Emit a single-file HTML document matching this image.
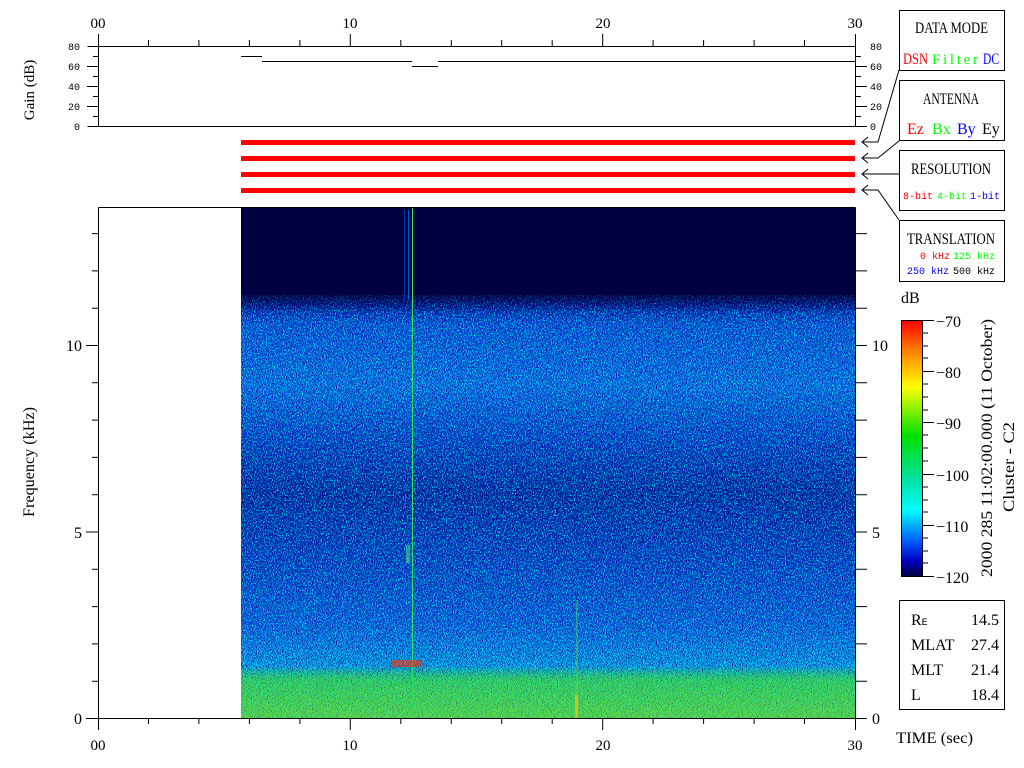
<!DOCTYPE html>
<html><head><meta charset="utf-8"><style>
html,body{margin:0;padding:0;background:#fff;width:1024px;height:768px;overflow:hidden}
svg{display:block}
.s{font-family:"Liberation Serif",serif;}
.m{font-family:"Liberation Mono",monospace;}
</style></head><body>
<svg width="1024" height="768" viewBox="0 0 1024 768" xmlns="http://www.w3.org/2000/svg">
<defs>
<linearGradient id="sp" x1="0" y1="0" x2="0" y2="1" gradientUnits="objectBoundingBox">
<stop offset="0" stop-color="#000040"/>
<stop offset="0.165" stop-color="#000040"/>
<stop offset="0.19" stop-color="#0010a0"/>
<stop offset="0.23" stop-color="#0a50e0"/>
<stop offset="0.35" stop-color="#1070f0"/>
<stop offset="0.45" stop-color="#0840d0"/>
<stop offset="0.56" stop-color="#0020a0"/>
<stop offset="0.68" stop-color="#0838c8"/>
<stop offset="0.82" stop-color="#1060e8"/>
<stop offset="0.9" stop-color="#10a0f0"/>
<stop offset="0.925" stop-color="#30d080"/>
<stop offset="1" stop-color="#60e040"/>
</linearGradient>
<linearGradient id="cb" x1="0" y1="0" x2="0" y2="1">
<stop offset="0" stop-color="#ff0000"/>
<stop offset="0.12" stop-color="#ff8000"/>
<stop offset="0.26" stop-color="#ffff00"/>
<stop offset="0.45" stop-color="#00e000"/>
<stop offset="0.62" stop-color="#00e0a0"/>
<stop offset="0.74" stop-color="#00ffff"/>
<stop offset="0.86" stop-color="#0060ff"/>
<stop offset="0.94" stop-color="#0000c0"/>
<stop offset="1" stop-color="#000040"/>
</linearGradient>
<linearGradient id="gr" x1="0" y1="0" x2="0" y2="1">
<stop offset="0" stop-color="#40e040" stop-opacity="0"/>
<stop offset="0.3" stop-color="#40e040" stop-opacity="0.5"/>
<stop offset="1" stop-color="#60e040" stop-opacity="0.55"/>
</linearGradient>
<filter id="nz" x="0" y="0" width="100%" height="100%">
<feTurbulence type="fractalNoise" baseFrequency="0.9 0.6" numOctaves="1" seed="3"/>
<feColorMatrix type="matrix" values="0 0 0 0 0  0 0 0 0 1  0 0 0 0 1  5 0 0 0 -2.4"/>
</filter>
<filter id="nz2" x="0" y="0" width="100%" height="100%">
<feTurbulence type="fractalNoise" baseFrequency="0.8 1.0" numOctaves="1" seed="9"/>
<feColorMatrix type="matrix" values="0 0 0 0 0  0 0 0 0 0  0 0 0 0 0.2  5 0 0 0 -2.5"/>
</filter>
<linearGradient id="fade" x1="0" y1="0" x2="0" y2="1">
<stop offset="0" stop-color="#000040" stop-opacity="1"/>
<stop offset="1" stop-color="#000040" stop-opacity="0"/>
</linearGradient>
</defs>

<g class="s" font-size="15" text-anchor="middle" fill="#000">
<text x="98" y="28">00</text><text x="350" y="28">10</text><text x="603" y="28">20</text><text x="855" y="28">30</text>
<text x="98" y="750">00</text><text x="350" y="750">10</text><text x="603" y="750">20</text><text x="855" y="750">30</text>
</g>
<g stroke="#000" stroke-width="1" fill="none">
<path d="M87.5 46.5H855.5V126.5H87.5M98.5 34V126.5M855.5 34V126.5"/>
<path d="M148.5 40V46M198.9 40V46M249.4 40V46M299.9 40V46M400.8 40V46M451.3 40V46M501.7 40V46M552.2 40V46M653.1 40V46M703.6 40V46M754.1 40V46M804.5 40V46M350.3 34V46M602.7 34V46"/>
<path d="M87 66.5H98M87 86.5H98M87 106.5H98M93 56.5H98M93 76.5H98M93 96.5H98M93 116.5H98"/>
<path d="M855 66.5H867M855 86.5H867M855 106.5H867M855 126.5H867M855 56.5H861M855 76.5H861M855 96.5H861M855 116.5H861"/>
<path d="M241 56.5H262M262 61.5H412M412 66.5H438M438 61.5H855"/>
</g>
<g class="m" font-size="10" fill="#000">
<g text-anchor="end"><text x="80" y="50">80</text><text x="80" y="70">60</text><text x="80" y="90">40</text><text x="80" y="110">20</text><text x="80" y="130">0</text></g>
<text x="870" y="50">80</text><text x="870" y="70">60</text><text x="870" y="90">40</text><text x="870" y="110">20</text><text x="870" y="130">0</text>
</g>
<text class="s" font-size="15" transform="translate(34,90) rotate(-90)" text-anchor="middle">Gain (dB)</text>

<g fill="#ff0000"><rect x="241" y="140" width="614" height="5"/><rect x="241" y="156" width="614" height="5"/><rect x="241" y="172" width="614" height="5"/><rect x="241" y="188" width="614" height="5"/></g>

<rect x="241" y="207" width="614" height="511" fill="url(#sp)"/>
<rect x="241" y="290" width="614" height="428" filter="url(#nz)" opacity="0.85"/>
<rect x="241" y="290" width="614" height="428" filter="url(#nz2)"/>
<rect x="241" y="665" width="614" height="53" fill="url(#gr)"/>
<rect x="241" y="207" width="614" height="88" fill="#000040"/>
<rect x="241" y="295" width="614" height="18" fill="url(#fade)" opacity="0.7"/>
<rect x="412" y="208" width="1" height="505" fill="#30e060"/>
<rect x="408" y="210" width="1" height="90" fill="#0080ff" opacity="0.7"/>
<rect x="404" y="210" width="1" height="90" fill="#0060ff" opacity="0.5"/>
<rect x="392" y="660" width="30" height="7" fill="#ff3000" opacity="0.6"/>
<rect x="406" y="545" width="4" height="18" fill="#40e080" opacity="0.6"/>
<rect x="576" y="600" width="2" height="118" fill="#60e040" opacity="0.4"/>
<rect x="575" y="695" width="3" height="23" fill="#ffc000" opacity="0.7"/>

<g stroke="#000" fill="none">
<path d="M98.5 207.5H855.5M98.5 207.5V718.5M98.5 718.5H855.5M855.5 207.5V718.5"/>
<path d="M98.5 718V730M148.5 718V724M198.9 718V724M249.4 718V724M299.9 718V724M350.3 718V730M400.8 718V724M451.3 718V724M501.7 718V724M552.2 718V724M602.7 718V730M653.1 718V724M703.6 718V724M754.1 718V724M804.5 718V724M855.5 718V730"/>
<path d="M86 718.5H98M92 681.2H98M92 643.9H98M92 606.6H98M92 569.3H98M86 532H98M92 494.7H98M92 457.4H98M92 420.1H98M92 382.8H98M86 345.5H98M92 308.2H98M92 270.9H98M92 233.6H98"/>
<path d="M855 718.5H867M855 681.2H867M855 643.9H867M855 606.6H867M855 569.3H867M855 532H867M855 494.7H867M855 457.4H867M855 420.1H867M855 382.8H867M855 345.5H867M855 308.2H867M855 270.9H867M855 233.6H867"/>
</g>
<g class="s" font-size="16" fill="#000">
<g text-anchor="end"><text x="82" y="351">10</text><text x="82" y="538">5</text><text x="82" y="724">0</text></g>
<text x="872" y="351">10</text><text x="872" y="538">5</text><text x="872" y="724">0</text>
<text x="896" y="743" textLength="77" lengthAdjust="spacingAndGlyphs">TIME (sec)</text>
</g>
<text class="s" font-size="16" transform="translate(34,462) rotate(-90)" text-anchor="middle" textLength="110" lengthAdjust="spacingAndGlyphs">Frequency (kHz)</text>

<g stroke="#000" fill="#fff">
<rect x="899.5" y="10.5" width="105" height="60"/>
<rect x="899.5" y="80.5" width="105" height="60"/>
<rect x="899.5" y="150.5" width="105" height="60"/>
<rect x="899.5" y="220.5" width="105" height="61"/>
<rect x="899.5" y="600.5" width="105" height="109"/>
</g>
<g stroke="#000" fill="none">
<path d="M899 70L878 142H862M868 137L862 142L868 147"/>
<path d="M899 141L878 158H862M868 153L862 158L868 163"/>
<path d="M899 174H862M868 169L862 174L868 179"/>
<path d="M899 220L878 190H862M868 185L862 190L868 195"/>
</g>
<g class="s" font-size="16">
<text x="915" y="33" textLength="73" lengthAdjust="spacingAndGlyphs">DATA MODE</text>
<text x="923" y="104" textLength="56" lengthAdjust="spacingAndGlyphs">ANTENNA</text>
<text x="911" y="174" textLength="80" lengthAdjust="spacingAndGlyphs">RESOLUTION</text>
<text x="907" y="244" textLength="88" lengthAdjust="spacingAndGlyphs">TRANSLATION</text>
</g>
<g class="s" font-size="16">
<text x="903" y="64" fill="#ff0000" textLength="25" lengthAdjust="spacingAndGlyphs">DSN</text><text x="932" y="64" fill="#00ff00" font-size="15" textLength="46" lengthAdjust="spacing">Filter</text><text x="983" y="64" fill="#0000ff" textLength="16" lengthAdjust="spacingAndGlyphs">DC</text>
<text x="907" y="134" fill="#ff0000">Ez</text><text x="932" y="134" fill="#00ff00">Bx</text><text x="957" y="134" fill="#0000ff">By</text><text x="982" y="134" fill="#000">Ey</text>
</g>
<g class="m" font-size="10">
<text x="903" y="199" fill="#ff0000" textLength="30" lengthAdjust="spacingAndGlyphs">8-bit</text><text x="937" y="199" fill="#00ff00" textLength="30" lengthAdjust="spacingAndGlyphs">4-bit</text><text x="970" y="199" fill="#0000ff" textLength="30" lengthAdjust="spacingAndGlyphs">1-bit</text>
<text x="920" y="259" fill="#ff0000" textLength="30" lengthAdjust="spacingAndGlyphs">0 kHz</text><text x="953" y="259" fill="#00ff00" textLength="42" lengthAdjust="spacingAndGlyphs">125 kHz</text>
<text x="907" y="274" fill="#0000ff" textLength="42" lengthAdjust="spacingAndGlyphs">250 kHz</text><text x="953" y="274" fill="#000" textLength="42" lengthAdjust="spacingAndGlyphs">500 kHz</text>
</g>

<text class="s" font-size="16" x="901" y="303">dB</text>
<rect x="901.5" y="320.5" width="21" height="256" fill="url(#cb)" stroke="#000"/>
<g stroke="#000">
<path d="M922 320.5H934M922 371.5H934M922 422.5H934M922 474.5H934M922 525.5H934M922 576.5H934"/>
<path d="M922 333H928M922 346H928M922 358H928M922 384H928M922 397H928M922 410H928M922 435H928M922 448H928M922 461H928M922 487H928M922 500H928M922 512H928M922 538H928M922 551H928M922 563H928"/>
</g>
<g class="s" font-size="16">
<text x="936" y="327">−70</text><text x="936" y="378">−80</text><text x="936" y="429">−90</text>
<text x="936" y="481">−100</text><text x="936" y="532">−110</text><text x="936" y="583">−120</text>
</g>
<text class="s" font-size="16" transform="translate(992,577) rotate(-90)" textLength="258" lengthAdjust="spacingAndGlyphs">2000 285 11:02:00.000 (11 October)</text>
<text class="s" font-size="16" transform="translate(1014,512) rotate(-90)" textLength="90" lengthAdjust="spacingAndGlyphs">Cluster - C2</text>

<g class="s" font-size="16">
<text x="911" y="625">R<tspan font-size="10" class="m">E</tspan></text><text x="999" y="625" text-anchor="end">14.5</text>
<text x="911" y="650">MLAT</text><text x="999" y="650" text-anchor="end">27.4</text>
<text x="911" y="675">MLT</text><text x="999" y="675" text-anchor="end">21.4</text>
<text x="911" y="700">L</text><text x="999" y="700" text-anchor="end">18.4</text>
</g>
</svg>
</body></html>
